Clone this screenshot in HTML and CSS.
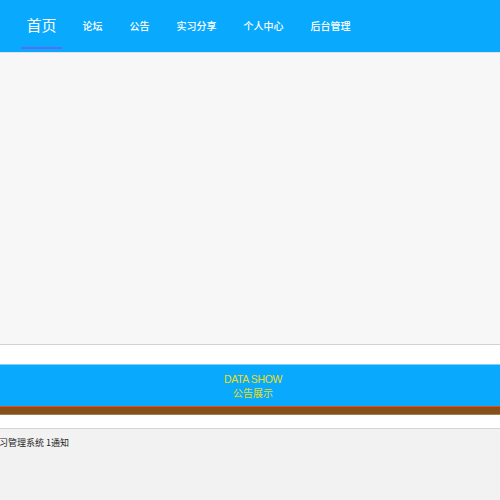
FILE: index.html
```html
<!DOCTYPE html>
<html lang="zh-CN">
<head>
<meta charset="utf-8">
<title>实习管理系统</title>
<link rel="stylesheet" href="styles.css">
</head>
<body>
<header class="header">
  <nav class="nav">
    <a class="nav-item nav-item--active">首页</a>
    <a class="nav-item">论坛</a>
    <a class="nav-item">公告</a>
    <a class="nav-item">实习分享</a>
    <a class="nav-item">个人中心</a>
    <a class="nav-item">后台管理</a>
  </nav>
</header>
<section class="carousel"></section>
<div class="spacer"></div>
<section class="banner">
  <div class="banner-en">DATA SHOW</div>
  <div class="banner-cn">公告展示</div>
</section>
<div class="brown-bar"></div>
<div class="spacer spacer--small"></div>
<section class="notice">
  <div class="notice-text">实习管理系统 1通知</div>
</section>
</body>
</html>
```

FILE: styles.css
```css
html, body {
  margin: 0;
  padding: 0;
}
body {
  width: 500px;
  height: 500px;
  overflow: hidden;
  background: #f2f2f2;
  font-family: "Noto Sans CJK SC", "Noto Sans", "Liberation Sans", sans-serif;
}
.header {
  height: 52px;
  background: #09a9fe;
  border-bottom: 1px solid #e2e2e2;
}
.nav {
  display: flex;
  align-items: flex-start;
  padding-left: 21px;
  height: 52px;
}
.nav-item {
  box-sizing: border-box;
  height: 49px;
  padding: 4px 13.5px 0;
  display: flex;
  align-items: center;
  color: #ffffff;
  font-size: 10px;
  font-weight: 500;
  border-bottom: 2px solid transparent;
  white-space: nowrap;
}
.nav-item--active {
  font-size: 15px;
  font-weight: 400;
  padding: 2px 5.5px 0;
  margin-right: 7px;
  border-bottom-color: #5a6df0;
}
.carousel {
  height: 291px;
  background: #f7f7f7;
  border-bottom: 1px solid #d2d2d2;
}
.spacer {
  height: 19px;
  background: #ffffff;
}
.spacer--small {
  height: 13px;
  border-bottom: 1px solid #d6d6d6;
}
.banner {
  box-sizing: border-box;
  height: 43px;
  background: #09a9fe;
  border-top: 1px solid #7fd0ff;
  border-bottom: 1px solid #f04a10;
  display: flex;
  flex-direction: column;
  justify-content: center;
  align-items: center;
  padding-left: 6px;
  color: #ecdf10;
}
.banner-en {
  font-family: "Liberation Sans", sans-serif;
  font-size: 10.5px;
  letter-spacing: -0.4px;
  line-height: 14px;
}
.banner-cn {
  font-size: 10px;
  line-height: 14px;
}
.brown-bar {
  height: 7px;
  background: #86501b;
  border-bottom: 1px solid #a87c50;
}
.notice {
  height: 72px;
  background: #f2f2f2;
  overflow: hidden;
}
.notice-text {
  padding-top: 8px;
  font-size: 9px;
  line-height: 12px;
  color: #1e1e1e;
  text-indent: -10px;
  white-space: nowrap;
}
```
